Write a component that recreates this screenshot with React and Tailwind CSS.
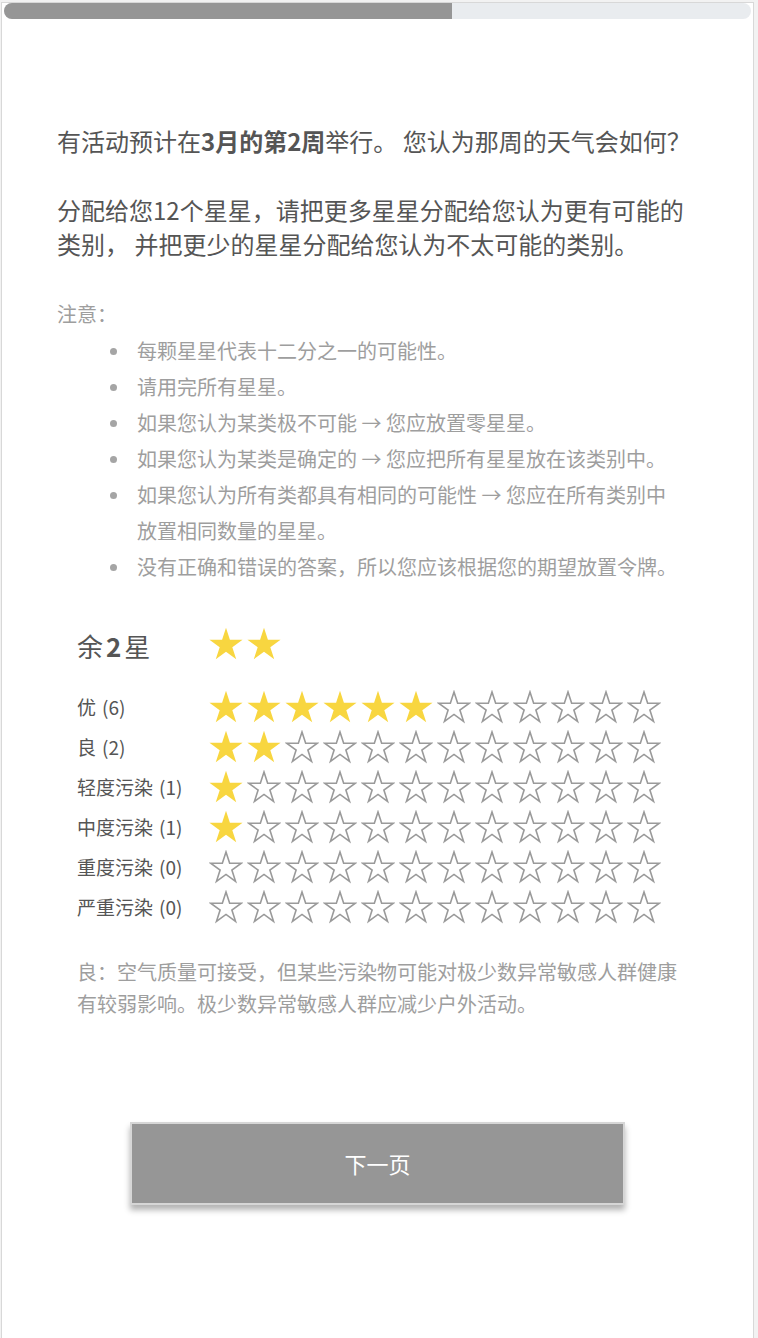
import React from 'react'

const rows = [
  { label: '优', n: 6 },
  { label: '良', n: 2 },
  { label: '轻度污染', n: 1 },
  { label: '中度污染', n: 1 },
  { label: '重度污染', n: 0 },
  { label: '严重污染', n: 0 },
]

const notes = [
  '每颗星星代表十二分之一的可能性。',
  '请用完所有星星。',
  '如果您认为某类极不可能 → 您应放置零星星。',
  '如果您认为某类是确定的 → 您应把所有星星放在该类别中。',
  '如果您认为所有类都具有相同的可能性 → 您应在所有类别中放置相同数量的星星。',
  '没有正确和错误的答案，所以您应该根据您的期望放置令牌。',
]

function starPoints(cx, cy, R){
  const r = R * 0.382
  const pts = []
  for(let i = 0; i < 10; i++){
    const rad = i % 2 === 0 ? R : r
    const a = -Math.PI / 2 + i * Math.PI / 5
    pts.push((cx + rad * Math.cos(a)).toFixed(2) + ',' + (cy + rad * Math.sin(a)).toFixed(2))
  }
  return pts.join(' ')
}

const FULL = starPoints(17, 18.2, 17.4)
const EMPTY = starPoints(17, 18.2, 16.2)

function Star({ filled }){
  return (
    <svg width="34" height="34" viewBox="0 0 34 34" className="shrink-0">
      {filled
        ? <polygon points={FULL} fill="#f8d640" />
        : <polygon points={EMPTY} fill="#fff" stroke="#9a9a9a" strokeWidth="1.6" />}
    </svg>
  )
}

function StarRow({ count, total }){
  return (
    <div className="flex gap-[4px]">
      {Array.from({ length: total }).map((_, i) => <Star key={i} filled={i < count} />)}
    </div>
  )
}

export default function App(){
  return (
    <div className="min-h-screen bg-[#f2f2f2] pt-[2px] pl-px font-['Noto_Sans_CJK_SC','Noto_Sans',sans-serif]">
      <div className="w-[753px] min-h-[1336px] bg-white border border-[#d8d8d8] border-b-0 px-px">
        {/* progress */}
        <div className="mx-px h-4 rounded-full bg-[#e9ecef] overflow-hidden">
          <div className="h-full w-[60%] bg-[#969696]" />
        </div>

        <div className="pl-[54px] pr-[56px]">
          <p className="mt-[105px] text-[24px] leading-[34px] text-[#555]">
            有活动预计在<b className="font-bold">3月的第2周</b>举行。 您认为那周的天气会如何？
          </p>
          <p className="mt-[35px] text-[24px] leading-[34px] text-[#555]">
            分配给您12个星星，请把更多星星分配给您认为更有可能的类别， 并把更少的星星分配给您认为不太可能的类别。
          </p>

          <div className="mt-[35px] text-[20px] leading-[36px] text-[#9e9e9e]">
            <div>注意：</div>
            <ul className="ml-[53px] mt-px pr-[12px]">
              {notes.map((t, i) => (
                <li key={i} className="flex">
                  <span className="w-[27px] h-[36px] shrink-0 flex items-center">
                    <span className="w-[7px] h-[7px] rounded-full bg-[#a5a5a5]" />
                  </span>
                  <span>{t}</span>
                </li>
              ))}
            </ul>
          </div>

          <div className="pl-[20px]">
            <div className="mt-[39px] h-[40px] flex items-center">
              <div className="w-[132px] text-[26px] text-[#555] leading-none pt-[4px]">
                余<span className="font-bold mx-[3px]">2</span>星
              </div>
              <StarRow count={2} total={2} />
            </div>

            <div className="mt-[23px]">
              {rows.map(r => (
                <div key={r.label} className="h-[40px] flex items-center">
                  <div className="w-[132px] text-[19px] text-[#555]">
                    {r.label}<span className="ml-[6px]">({r.n})</span>
                  </div>
                  <StarRow count={r.n} total={12} />
                </div>
              ))}
            </div>

            <p className="mt-[29px] text-[20px] leading-[32px] text-[#9e9e9e]">
              良：空气质量可接受，但某些污染物可能对极少数异常敏感人群健康有较弱影响。极少数异常敏感人群应减少户外活动。
            </p>
          </div>
        </div>

        <div className="mt-[102px] flex justify-center">
          <button className="w-[495px] h-[83px] bg-[#969696] border-2 border-[#d6d6d6] text-white text-[22px] shadow-[0_5px_6px_rgba(0,0,0,0.3)]">
            下一页
          </button>
        </div>
      </div>
    </div>
  )
}
